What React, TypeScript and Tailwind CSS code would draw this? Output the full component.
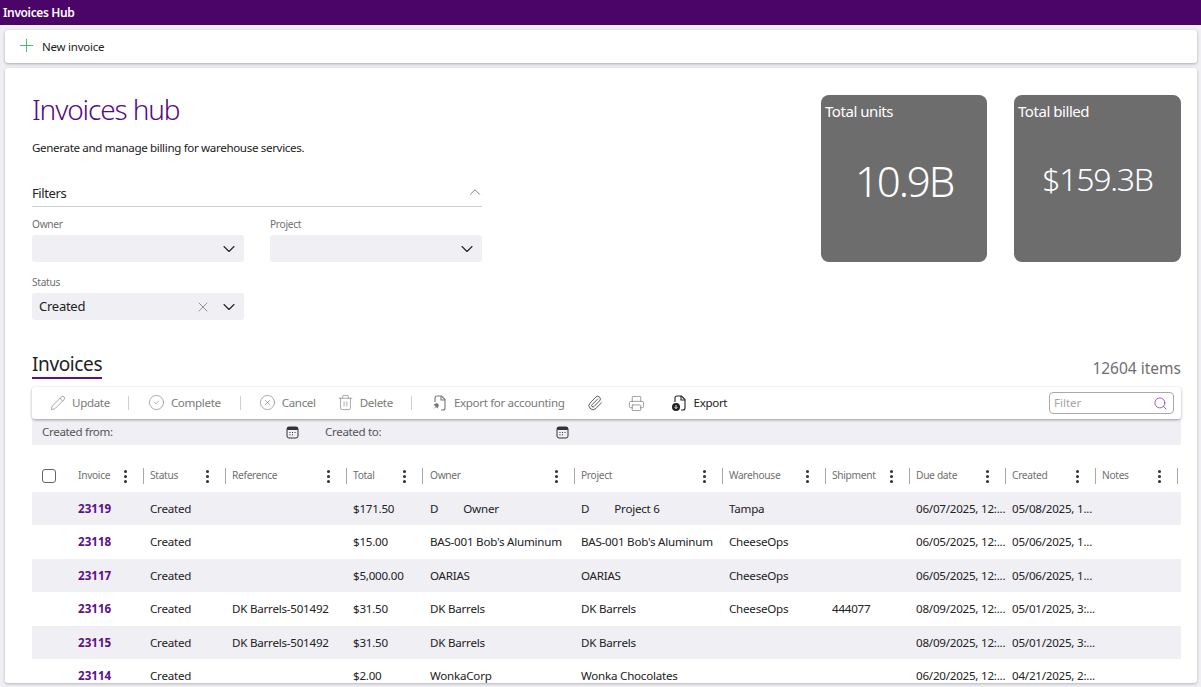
import React from "react";
import { Plus, ChevronDown, ChevronUp, X, Pencil, CircleCheck, CircleX, Trash2, Paperclip, Printer, Search, EllipsisVertical } from "lucide-react";

const font = { fontFamily: '"Noto Sans", "Open Sans", sans-serif' };

const cols = [
  { name: "Invoice", w: "w-[112px]", pl: "pl-[46px]" },
  { name: "Status", w: "w-[82px]", pl: "pl-[6px]" },
  { name: "Reference", w: "w-[121px]", pl: "pl-[6px]" },
  { name: "Total", w: "w-[76px]", pl: "pl-[6px]" },
  { name: "Owner", w: "w-[152px]", pl: "pl-[7px]" },
  { name: "Project", w: "w-[148px]", pl: "pl-[6px]" },
  { name: "Warehouse", w: "w-[103px]", pl: "pl-[6px]" },
  { name: "Shipment", w: "w-[84px]", pl: "pl-[6px]" },
  { name: "Due date", w: "w-[96px]", pl: "pl-[6px]" },
  { name: "Created", w: "w-[90px]", pl: "pl-[6px]" },
  { name: "Notes", w: "w-[82px]", pl: "pl-[6px]" },
];

const rows: string[][] = [
  ["23119", "Created", "", "$171.50", "D\u00a0\u00a0\u00a0\u00a0\u00a0\u00a0\u00a0\u00a0\u00a0Owner", "D\u00a0\u00a0\u00a0\u00a0\u00a0\u00a0\u00a0\u00a0\u00a0Project 6", "Tampa", "", "06/07/2025, 12:...", "05/08/2025, 1...", ""],
  ["23118", "Created", "", "$15.00", "BAS-001 Bob's Aluminum", "BAS-001 Bob's Aluminum", "CheeseOps", "", "06/05/2025, 12:...", "05/06/2025, 1...", ""],
  ["23117", "Created", "", "$5,000.00", "OARIAS", "OARIAS", "CheeseOps", "", "06/05/2025, 12:...", "05/06/2025, 1...", ""],
  ["23116", "Created", "DK Barrels-501492", "$31.50", "DK Barrels", "DK Barrels", "CheeseOps", "444077", "08/09/2025, 12:...", "05/01/2025, 3:...", ""],
  ["23115", "Created", "DK Barrels-501492", "$31.50", "DK Barrels", "DK Barrels", "", "", "08/09/2025, 12:...", "05/01/2025, 3:...", ""],
  ["23114", "Created", "", "$2.00", "WonkaCorp", "Wonka Chocolates", "", "", "06/20/2025, 12:...", "04/21/2025, 2:...", ""],
];

function CalendarGlyph() {
  return (
    <svg width="13" height="13" viewBox="0 0 13 13" fill="none" className="text-[#333]">
      <rect x="1" y="1" width="11" height="11" rx="2" stroke="currentColor" />
      <rect x="1" y="1" width="11" height="3" rx="1" fill="currentColor" />
      <path d="M3.5 6.5h1M6 6.5h1M8.5 6.5h1M3.5 8.8h1M6 8.8h1" stroke="currentColor" />
    </svg>
  );
}

function FileMark({ kind, className }: { kind: "pin" | "dot"; className: string }) {
  return (
    <svg width="18" height="18" viewBox="0 0 18 18" fill="none" className={className}>
      <path d="M7 2h4.5L15 5.5V14a2 2 0 0 1-2 2h-2" stroke="currentColor" strokeWidth="1.1" />
      <path d="M11 2v4h4M7 2a2 2 0 0 0-2 2v4" stroke="currentColor" strokeWidth="1.1" />
      {kind === "dot" ? (
        <>
          <circle cx="6" cy="13" r="4" fill="currentColor" />
          <path d="M6 11v3.4M4.6 13.2 6 14.6l1.4-1.4" stroke="#fff" strokeWidth="0.9" />
        </>
      ) : (
        <path d="M3.5 10.5 7 9l2 2-1.5 3.5-1.5-1.6-2.8 2.6 2.4-3-2.1-2Z" fill="currentColor" />
      )}
    </svg>
  );
}

function Field({ label, value, clear, className }: { label: string; value?: string; clear?: boolean; className?: string }) {
  return (
    <div className={`w-[212px] ${className ?? ""}`}>
      <div className="h-[17px] text-[10.2px] leading-[19px] tracking-[-0.03em] text-[#6f6f6f]">{label}</div>
      <div className="mt-[3px] flex h-[27px] items-center rounded-[3px] bg-[#efeff4] pl-[7px] pr-[5px]">
        <span className="flex-1 pt-[1px] text-[13px] tracking-[-0.02em] text-[#222]">{value}</span>
        {clear && <X size={16} strokeWidth={0.9} className="mr-[8px] text-[#555]" />}
        <ChevronDown size={20} strokeWidth={1.3} className="text-[#222]" />
      </div>
    </div>
  );
}

function Tool({ icon, label, muted = true, className }: { icon: React.ReactNode; label?: string; muted?: boolean; className?: string }) {
  return (
    <div className={`flex items-center gap-[6px] text-[11.6px] tracking-[-0.03em] ${muted ? "text-[#7a7a7a]" : "text-[#222]"} ${className ?? ""}`}>
      {icon}
      {label && <span>{label}</span>}
    </div>
  );
}

function Sep({ className }: { className?: string }) {
  return <div className={`h-[14px] w-px bg-[#cfcfcf] ${className ?? ""}`} />;
}

function Kpi({ title, value, className, valueClass }: { title: string; value: string; className: string; valueClass: string }) {
  return (
    <div className={`relative flex h-[167px] items-center justify-center rounded-[8px] bg-[#6d6d6d] text-white ${className}`}>
      <div className="absolute left-[4px] top-[6px] text-[15px] leading-[20px] tracking-[-0.03em]">{title}</div>
      <div className={`font-light ${valueClass}`}>{value}</div>
    </div>
  );
}

export default function App() {
  return (
    <div style={font} className="flex h-[687px] w-[1201px] flex-col overflow-hidden bg-[#efeff4] text-[#222]">
      <header className="flex h-[25px] shrink-0 items-center bg-[#4b0468] pl-[3px] text-[12px] font-semibold tracking-[-0.03em] text-white">Invoices Hub</header>

      <div className="ml-[5px] mt-[5px] flex h-[33px] w-[1192px] shrink-0 items-center rounded-[3px] bg-white pl-[11px] shadow-[0_1px_3px_rgba(0,0,0,0.3)]">
        <Plus size={21} strokeWidth={0.9} className="-mt-[2px] text-[#1fa94a]" />
        <span className="ml-[5px] text-[11.5px] tracking-[-0.02em] text-[#222]">New invoice</span>
      </div>

      <main className="ml-[5px] mt-[5px] h-[615px] w-[1192px] shrink-0 overflow-hidden rounded-[3px] bg-white pl-[27px] pr-[16px] shadow-[0_1px_3px_rgba(0,0,0,0.25)]">
        <section className="flex h-[270px]">
          <div className="w-[450px] pt-[23px]">
            <h1 className="text-[28px] font-light leading-[36px] tracking-[-0.04em] text-[#560a85]">Invoices hub</h1>
            <p className="mt-[12px] text-[11.6px] leading-[18px] tracking-[-0.03em]">Generate and manage billing for warehouse services.</p>
            <div className="mt-[26px] flex h-[24px] items-center justify-between border-b border-[#cfcfd4] pb-[1px]">
              <span className="text-[13px] tracking-[-0.03em]">Filters</span>
              <ChevronUp size={18} strokeWidth={1} className="-mr-[2px] mb-[4px] text-[#555]" />
            </div>
            <div className="mt-[8px] flex gap-[26px]">
              <Field label="Owner" />
              <Field label="Project" />
            </div>
            <Field label="Status" value="Created" clear className="mt-[11px]" />
          </div>
          <div className="ml-auto flex gap-[27px] pt-[27px]">
            <Kpi title="Total units" value="10.9B" className="w-[166px]" valueClass="mt-[4px] text-[42px] tracking-[-0.05em]" />
            <Kpi title="Total billed" value="$159.3B" className="w-[167px]" valueClass="text-[32px] tracking-[-0.04em]" />
          </div>
        </section>

        <section>
          <div className="flex h-[41px] items-end justify-between">
            <div className="border-b-2 border-[#5c0f8b] text-[19px] leading-[25px] tracking-[-0.02em]">Invoices</div>
            <div className="-mb-[1px] text-[15.5px] leading-[24px] text-[#6f6f6f]">12604 items</div>
          </div>
          <div className="relative z-10 mt-[8px] flex h-[32px] items-center rounded-[3px] bg-white pl-[18px] pr-[7px] shadow-[0_1px_3px_rgba(0,0,0,0.35)]">
            <Tool icon={<Pencil size={16} strokeWidth={1} />} label="Update" />
            <Sep className="ml-[18px]" />
            <Tool className="ml-[19px]" icon={<CircleCheck size={17} strokeWidth={0.9} />} label="Complete" />
            <Sep className="ml-[19px]" />
            <Tool className="ml-[18px]" icon={<CircleX size={17} strokeWidth={0.9} />} label="Cancel" />
            <Tool className="ml-[21px]" icon={<Trash2 size={17} strokeWidth={0.9} />} label="Delete" />
            <Sep className="ml-[18px]" />
            <Tool className="ml-[18px]" icon={<FileMark kind="pin" className="text-[#777]" />} label="Export for accounting" />
            <Tool className="ml-[22px]" muted={false} icon={<Paperclip size={16} strokeWidth={1.1} />} />
            <Tool className="ml-[25px]" icon={<Printer size={17} strokeWidth={1} />} />
            <Tool className="ml-[25px]" muted={false} icon={<FileMark kind="dot" className="text-[#222]" />} label="Export" />
            <div className="ml-auto flex h-[22px] w-[125px] items-center justify-between rounded-[4px] border border-[#a9a9a9] pl-[4px] pr-[5px]">
              <span className="text-[11.5px] text-[#a6a6a6]">Filter</span>
              <Search size={15} strokeWidth={1.2} className="text-[#7b2fa8]" />
            </div>
          </div>

          <div className="flex h-[26px] items-center bg-[#efeff4] pl-[10px] text-[11.6px] tracking-[-0.03em] text-[#555]">
            <span className="w-[244px]">Created from:</span>
            <CalendarGlyph />
            <span className="ml-[26px] w-[231px]">Created to:</span>
            <CalendarGlyph />
          </div>

          <div className="relative mt-[15px] flex h-[32px] items-center">
            <div className="absolute left-[10px] top-[9px] h-[14px] w-[14px] rounded-[3px] border border-[#666]" />
            {cols.map((c) => (
              <div key={c.name} className={`flex h-[16px] shrink-0 items-center border-r border-[#a9a9a9] pr-[9px] ${c.w} ${c.pl}`}>
                <span className="flex-1 whitespace-nowrap text-[10.2px] tracking-[-0.03em] text-[#6f6f6f]">{c.name}</span>
                <EllipsisVertical size={17} strokeWidth={2.4} className="text-[#333]" />
              </div>
            ))}
          </div>

          <div>
            {rows.map((r, i) => (
              <div key={r[0]} className={`flex h-[33.4px] items-center ${i % 2 === 0 ? "bg-[#efeff4]" : "bg-white"}`}>
                {cols.map((c, j) => (
                  <div key={c.name} className={`shrink-0 whitespace-nowrap text-[11.6px] ${c.w} ${c.pl} ${j === 0 ? "font-bold text-[#5c0f8b]" : "tracking-[-0.02em] text-[#222]"}`}>
                    {r[j]}
                  </div>
                ))}
              </div>
            ))}
          </div>
        </section>
      </main>
    </div>
  );
}
